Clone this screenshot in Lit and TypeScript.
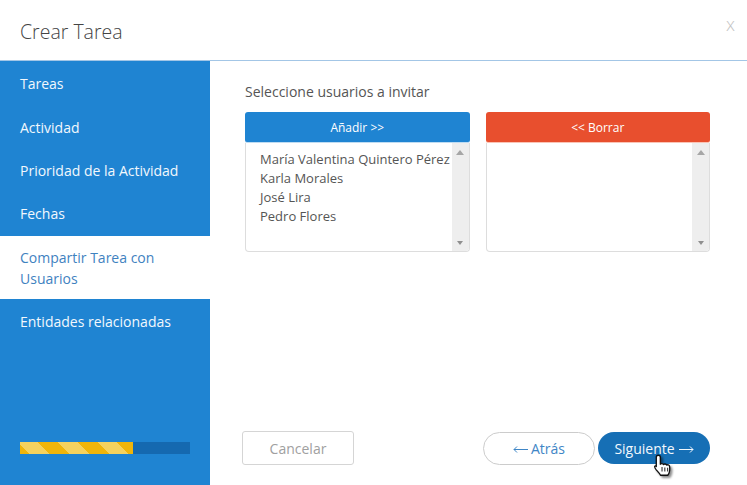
import { LitElement, html, css } from "lit";
import { customElement } from "lit/decorators.js";

const NAV_TOP = ["Tareas", "Actividad", "Prioridad de la Actividad", "Fechas"];
const USERS = ["María Valentina Quintero Pérez", "Karla Morales", "José Lira", "Pedro Flores"];

@customElement("app-root")
export class AppRoot extends LitElement {
  static styles = css`
    :host {
      display: block;
      width: 747px;
      height: 485px;
      background: #fff;
      font-family: "Open Sans", sans-serif;
      font-size: 13px;
      color: #555;
      overflow: hidden;
    }
    .modal {
      position: relative;
      display: flex;
      flex-direction: column;
      height: 100%;
    }
    .header {
      flex: none;
      height: 60px;
      display: flex;
      align-items: center;
      justify-content: space-between;
      padding: 0 12px 0 20px;
      border-bottom: 1px solid #a3c6e6;
    }
    .title {
      font-size: 19.5px;
      font-weight: 300;
      color: #444;
      margin-top: 2px;
    }
    .close {
      font-size: 18px;
      font-weight: 300;
      color: #c4c4c4;
      margin-top: -13px;
      line-height: 1;
    }
    .body {
      flex: 1;
      display: flex;
      min-height: 0;
    }
    .side {
      flex: none;
      width: 210px;
      display: flex;
      flex-direction: column;
      background: #1f84d2;
      color: #f2f8fd;
      font-size: 14px;
      line-height: 21px;
    }
    .nav-item {
      height: 43px;
      display: flex;
      align-items: center;
      padding: 0 20px;
    }
    .nav-item.first {
      height: 45px;
      padding-bottom: 1px;
      box-sizing: border-box;
    }
    .nav-item.active {
      height: auto;
      margin-top: 1px;
      padding: 11px 20px 10px;
      background: #fff;
      color: #3f82bf;
    }
    .nav-item.after {
      margin-top: 1px;
    }
    .progress {
      margin: auto 20px 31px;
      height: 12px;
      background: #1569b0;
    }
    .progress-fill {
      height: 100%;
      background: repeating-linear-gradient(
        45deg,
        #f0b50a 0,
        #f0b50a 7px,
        #f5d25e 7px,
        #f5d25e 21px,
        #f0b50a 21px,
        #f0b50a 28px
      );
    }
    .main {
      flex: 1;
      display: flex;
      flex-direction: column;
      padding: 21px 37px 20px 35px;
      min-width: 0;
    }
    .label {
      font-size: 14px;
      line-height: 20px;
      color: #555;
      margin-bottom: 10px;
    }
    .pickers {
      display: flex;
      gap: 16px;
    }
    .picker {
      flex: 1;
      min-width: 0;
    }
    .pick-btn {
      height: 30px;
      display: flex;
      align-items: center;
      justify-content: center;
      border-radius: 3px 3px 2px 2px;
      color: #fff;
      font-size: 12px;
    }
    .pick-btn.add {
      background: #1f84d2;
      box-shadow: 0 1px 0 #bfdcf2;
    }
    .pick-btn.del {
      background: #e84f2e;
      box-shadow: 0 1px 0 #fac4b6;
    }
    .list {
      margin-top: 1px;
      height: 109px;
      box-sizing: border-box;
      display: flex;
      border: 1px solid #ddd;
      border-top: 0;
      border-radius: 0 0 4px 4px;
      overflow: hidden;
    }
    .rows {
      flex: 1;
      min-width: 0;
      padding: 7px 0 0 14px;
      font-size: 13px;
      line-height: 19px;
      white-space: nowrap;
      color: #555;
    }
    .bar {
      flex: none;
      width: 17px;
      background: #eee;
      display: flex;
      flex-direction: column;
      justify-content: space-between;
      align-items: center;
      padding: 7px 0 6px;
    }
    .tri-up {
      width: 0;
      height: 0;
      border: 4px solid transparent;
      border-top: 0;
      border-bottom: 5px solid #a6a6a6;
    }
    .tri-down {
      width: 0;
      height: 0;
      border: 3px solid transparent;
      border-bottom: 0;
      border-top: 4px solid #8f8f8f;
    }
    .footer {
      margin-top: auto;
      display: flex;
      align-items: center;
      margin-left: -3px;
    }
    .btn {
      box-sizing: border-box;
      display: flex;
      align-items: center;
      justify-content: center;
      gap: 3px;
      width: 112px;
      font-size: 14px;
    }
    .arrow {
      flex: none;
      width: 15px;
      height: 7px;
      margin-top: 2px;
      fill: none;
      stroke: currentColor;
      stroke-width: 1;
    }
    .cancel {
      height: 34px;
      border: 1px solid #d5d5d5;
      border-radius: 3px;
      color: #a0a0a0;
      margin-right: auto;
    }
    .back {
      height: 33px;
      border: 1px solid #ccc;
      border-radius: 17px;
      color: #3f86c6;
      margin-right: 3px;
    }
    .next {
      height: 32px;
      background: #166fb5;
      border-radius: 16px;
      color: #f2f8fd;
      gap: 4px;
    }
    .cursor {
      position: absolute;
      left: 652px;
      top: 453px;
      width: 25px;
      height: 27px;
      filter: drop-shadow(2px 2px 1px rgba(0, 0, 0, 0.45));
    }
  `;

  render() {
    return html`
      <div class="modal">
        <div class="header">
          <div class="title">Crear Tarea</div>
          <div class="close">x</div>
        </div>
        <div class="body">
          <div class="side">
            ${NAV_TOP.map(
              (t, i) => html`<div class="nav-item ${i === 0 ? "first" : ""}">${t}</div>`
            )}
            <div class="nav-item active">Compartir Tarea con Usuarios</div>
            <div class="nav-item after">Entidades relacionadas</div>
            <div class="progress">
              <div class="progress-fill" style="width: ${(113 / 170) * 100}%"></div>
            </div>
          </div>
          <div class="main">
            <div class="label">Seleccione usuarios a invitar</div>
            <div class="pickers">
              <div class="picker">
                <div class="pick-btn add">Añadir &gt;&gt;</div>
                <div class="list">
                  <div class="rows">${USERS.map((u) => html`<div>${u}</div>`)}</div>
                  <div class="bar"><span class="tri-up"></span><span class="tri-down"></span></div>
                </div>
              </div>
              <div class="picker">
                <div class="pick-btn del">&lt;&lt; Borrar</div>
                <div class="list">
                  <div class="rows"></div>
                  <div class="bar"><span class="tri-up"></span><span class="tri-down"></span></div>
                </div>
              </div>
            </div>
            <div class="footer">
              <div class="btn cancel">Cancelar</div>
              <div class="btn back">
                <svg class="arrow" viewBox="0 0 15 7"><path d="M15 3.500H1M4 .5L1 3.500l3 3" /></svg>
                Atrás
              </div>
              <div class="btn next">
                Siguiente
                <svg class="arrow" viewBox="0 0 15 7"><path d="M0 3.500h14M11 .5l3 3-3 3" /></svg>
              </div>
            </div>
          </div>
        </div>
        <svg class="cursor" viewBox="0 0 22 24">
          <path
            d="M5.500 2c1 0 1.800.8 1.800 1.800V10c.6-.9 2.400-.8 2.800.3.6-.8 2.400-.7 2.800.5.7-.6 2.400-.3 2.600 1 .3 1.800.2 3.600-.2 5.200-.3 1.200-.8 2-1.400 2.800H7.500c-.8-1.600-2.200-3-3.800-4.800-1.100-1.300-1.900-2.700-1.100-3.400.8-.7 1.300-.2 1.100.4V3.800C3.700 2.800 4.500 2 5.500 2z"
            fill="#fff"
            stroke="#111"
            stroke-width="1.200"
            stroke-linejoin="round"
          />
          <path d="M8.800 12.500v4M11.300 12.800v3.700M13.800 13.200v3.300" stroke="#222" stroke-width=".9" fill="none" />
        </svg>
      </div>
    `;
  }
}
